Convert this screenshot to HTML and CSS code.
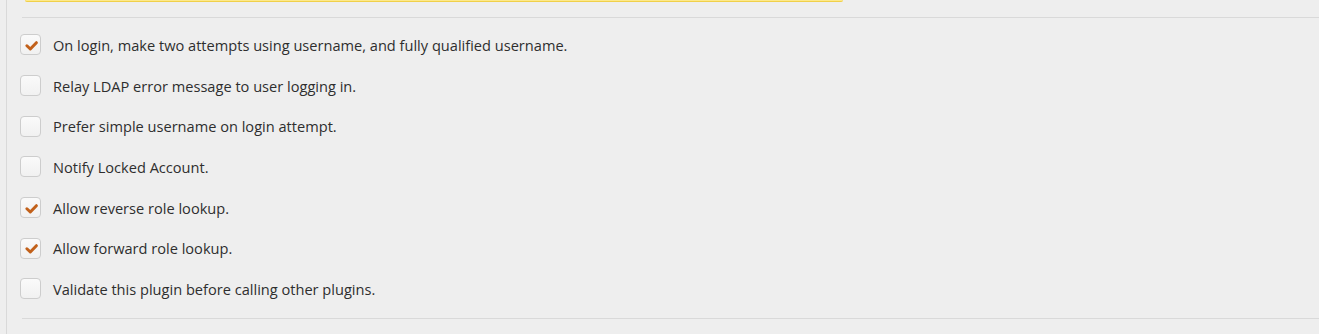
FILE: index.html
```html
<!DOCTYPE html>
<html>
<head>
<meta charset="utf-8">
<link rel="stylesheet" href="styles.css">
</head>
<body>
<div class="page">
  <div class="notice"></div>
  <div class="section">
    <label class="row"><span class="box checked"><svg viewBox="0 0 20 20" width="20" height="20"><path d="M6.2 10.8 L9.8 14.2 L16.2 7.6" /></svg></span><span class="text">On login, make two attempts using username, and fully qualified username.</span></label>
    <label class="row"><span class="box"></span><span class="text">Relay LDAP error message to user logging in.</span></label>
    <label class="row"><span class="box"></span><span class="text">Prefer simple username on login attempt.</span></label>
    <label class="row"><span class="box"></span><span class="text">Notify Locked Account.</span></label>
    <label class="row"><span class="box checked"><svg viewBox="0 0 20 20" width="20" height="20"><path d="M6.2 10.8 L9.8 14.2 L16.2 7.6" /></svg></span><span class="text">Allow reverse role lookup.</span></label>
    <label class="row"><span class="box checked"><svg viewBox="0 0 20 20" width="20" height="20"><path d="M6.2 10.8 L9.8 14.2 L16.2 7.6" /></svg></span><span class="text">Allow forward role lookup.</span></label>
    <label class="row"><span class="box"></span><span class="text">Validate this plugin before calling other plugins.</span></label>
  </div>
</div>
</body>
</html>
```
FILE: styles.css
```css
html, body {
  margin: 0;
  padding: 0;
  background: #eeeeee;
  height: 100%;
  overflow: hidden;
}
.page {
  margin-left: 6px;
  border-left: 1px solid #d9d9d9;
  height: 334px;
  font-family: "Open Sans", "Noto Sans", sans-serif;
  font-size: 14.6px;
  color: #2e2e2e;
}
.notice {
  margin-left: 18px;
  width: 818px;
  height: 1px;
  background: #fde98a;
  border-bottom: 1px solid #f0d04a;
  border-radius: 0 0 4px 4px;
}
.section {
  margin-left: 15px;
  margin-top: 15px;
  border-top: 1px solid #d9d9d9;
  border-bottom: 1px solid #d9d9d9;
  padding: 6.67px 0 8.67px;
  display: flex;
  flex-direction: column;
}
.row {
  display: flex;
  align-items: center;
  height: 40.67px;
}
.box {
  box-sizing: border-box;
  width: 21px;
  height: 21px;
  margin-left: -2px;
  margin-right: 12px;
  border: 1px solid #cdcdcd;
  border-radius: 4px;
  background: linear-gradient(#fafafa, #f1f1f1);
  display: flex;
  align-items: center;
  justify-content: center;
  flex: none;
}
.box svg {
  display: block;
}
.box path {
  fill: none;
  stroke: #c2611b;
  stroke-width: 3.2;
  stroke-linecap: round;
  stroke-linejoin: round;
}
.text {
  line-height: 20px;
}
```
